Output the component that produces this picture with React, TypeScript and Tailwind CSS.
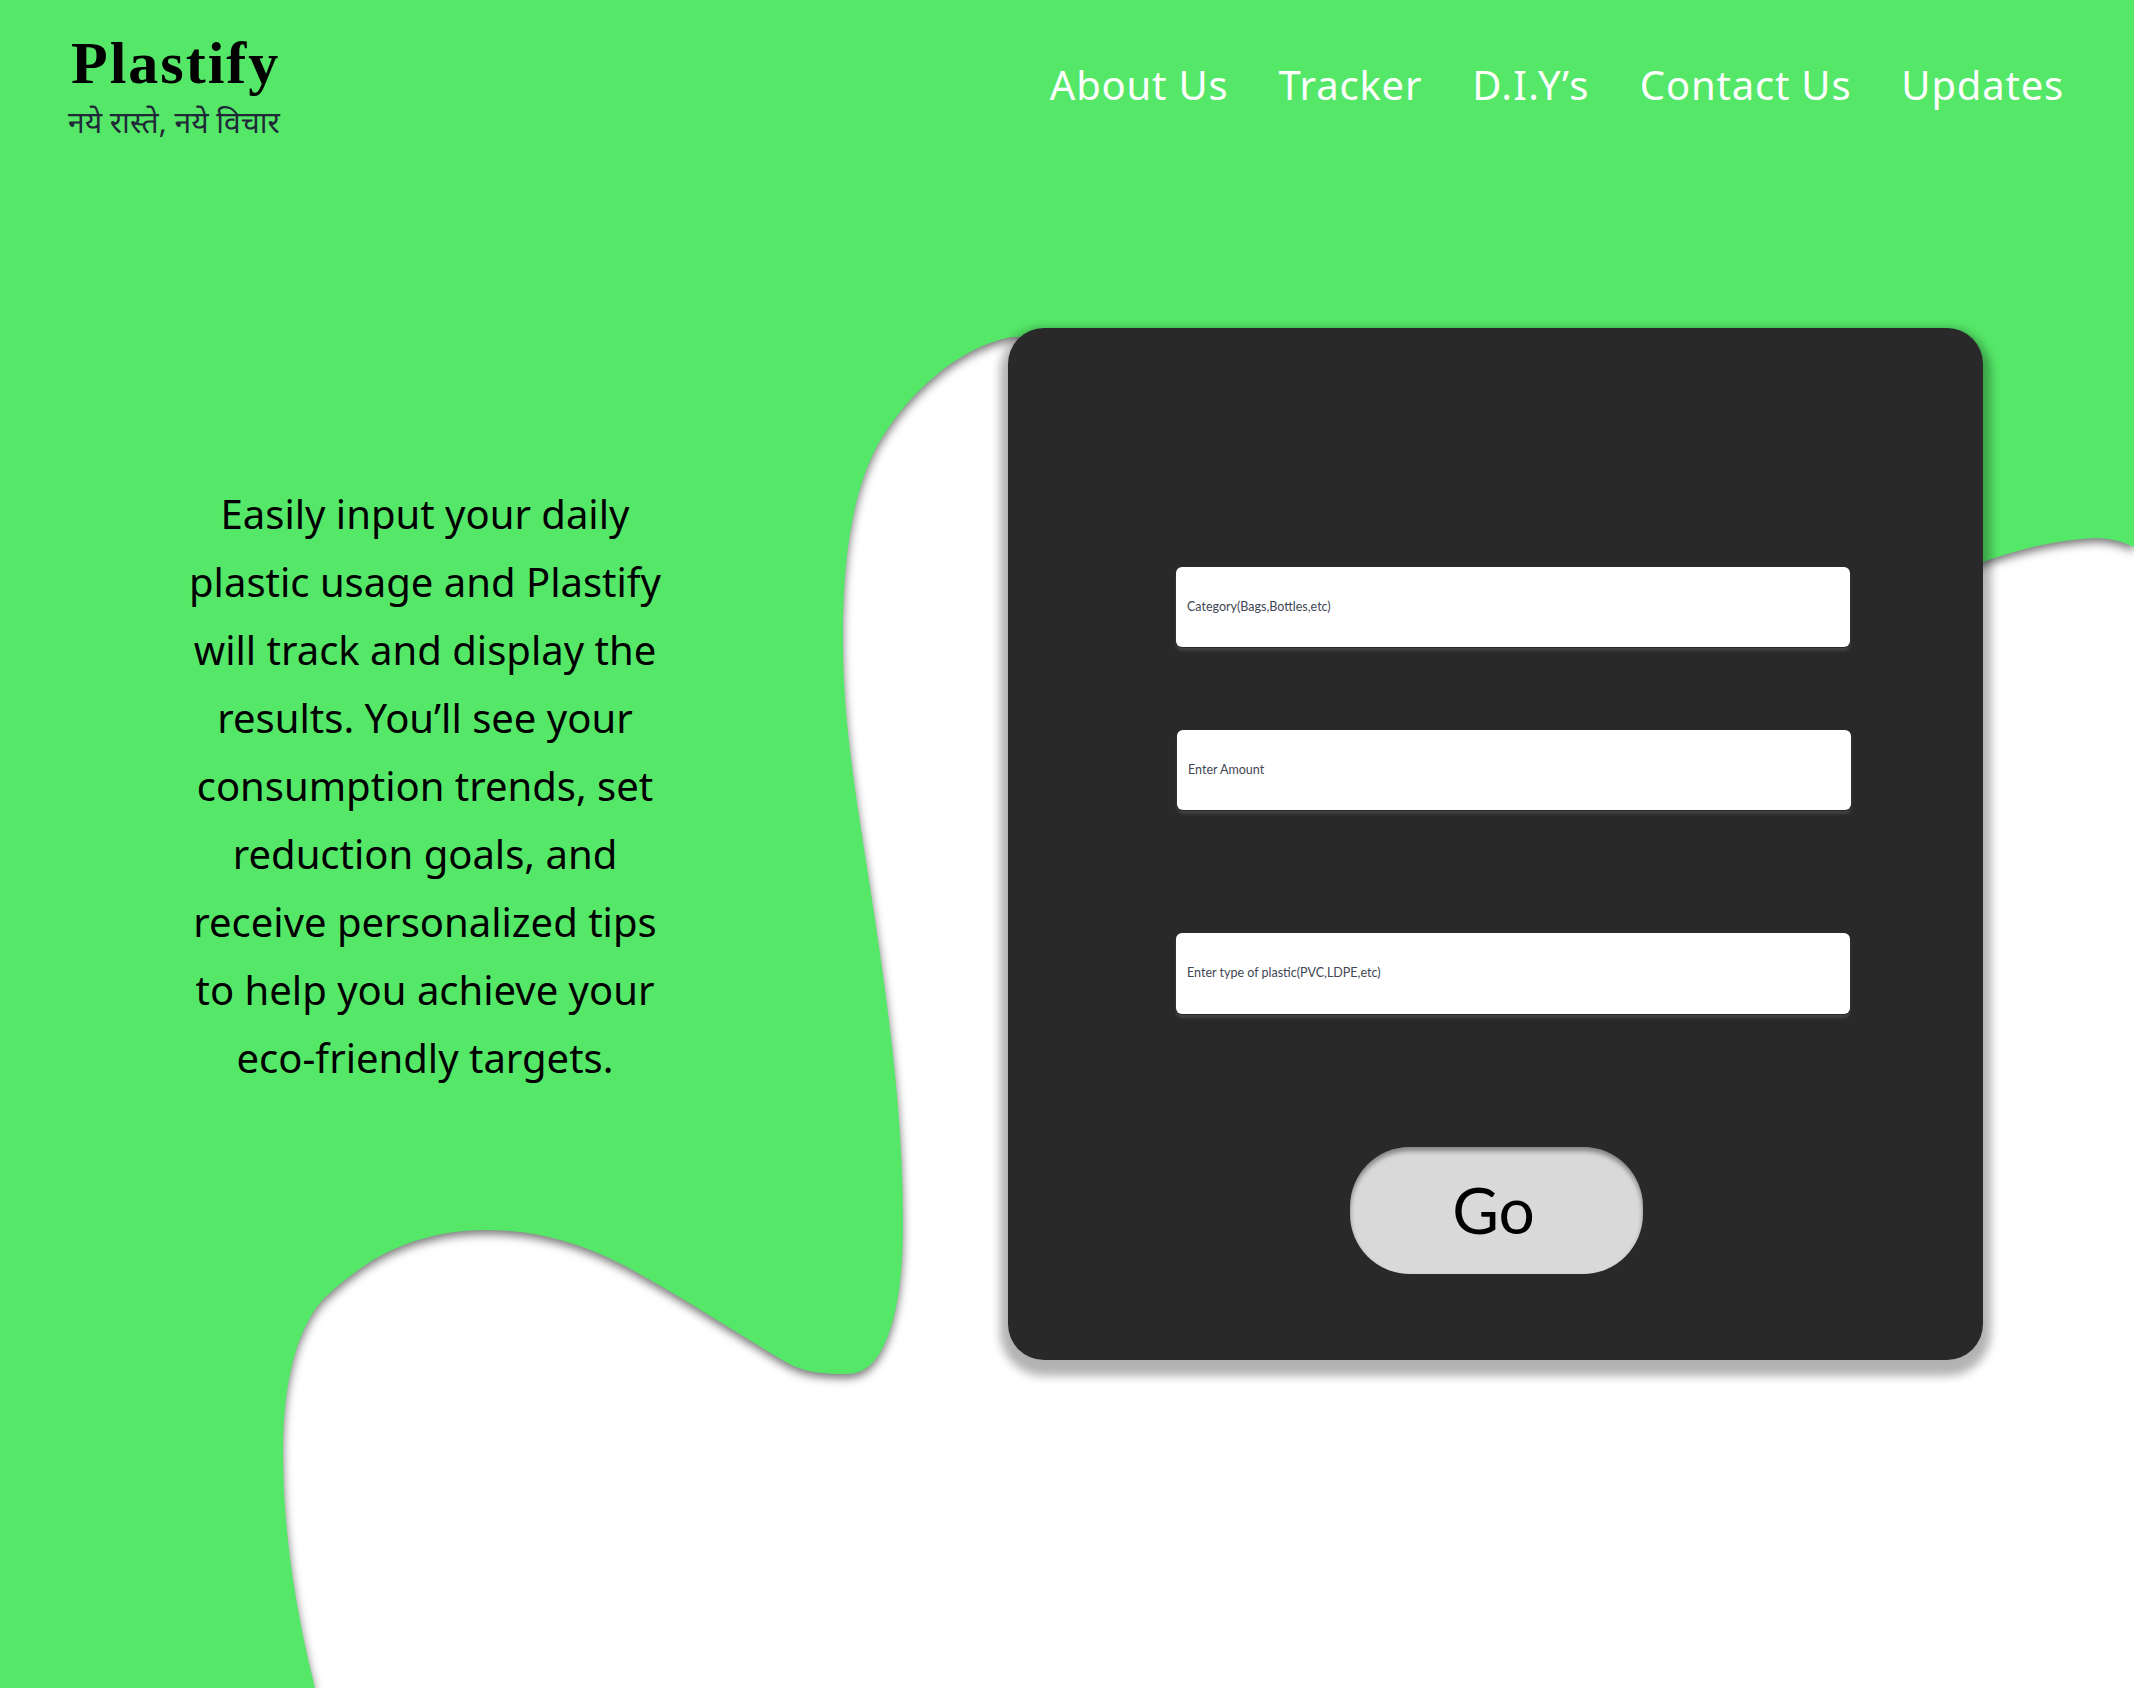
const links = ['About Us', 'Tracker', 'D.I.Y’s', 'Contact Us', 'Updates']

const lines = [
  'Easily input your daily',
  'plastic usage and Plastify',
  'will track and display the',
  'results. You’ll see your',
  'consumption trends, set',
  'reduction goals, and',
  'receive personalized tips',
  'to help you achieve your',
  'eco-friendly targets.',
]

function Backdrop() {
  return (
    <svg
      className="absolute inset-0 drop-shadow-[0_4px_5px_rgba(0,0,0,0.55)]"
      width="2134"
      height="1688"
      viewBox="0 0 2134 1688"
    >
      <path
        fill="#55e868"
        d="M0 0H2134V547C2122 541 2108 538 2095 538C2055 540 2015 550 1983 562C1700 660 1300 330 1013 337C960 345 905 395 875 450C850 500 842 570 843 650C844 740 862 830 875 920C890 1020 903 1120 903 1223C903 1285 895 1330 878 1356C868 1370 858 1374 846 1374C826 1374 804 1373 786 1362C767 1351 725 1325 696 1307C660 1285 630 1268 607 1257C570 1240 530 1230 487 1230C440 1230 400 1243 370 1262C352 1274 342 1282 330 1293C315 1305 305 1325 297 1347C288 1375 283 1410 283 1450C283 1540 298 1620 315 1688L0 1688Z"
      />
    </svg>
  )
}

function Field({ placeholder, className }: { placeholder: string; className: string }) {
  return (
    <input
      placeholder={placeholder}
      className={`w-[674px] rounded-md bg-white pb-[2px] pl-[11px] font-['Lato',sans-serif] text-[12.5px] text-[#3f4654] placeholder:text-[#3f4654] shadow-[0_1px_0_#26262b,0_4px_3px_rgba(255,255,255,0.12)] outline-none ${className}`}
    />
  )
}

export default function App() {
  return (
    <div className="relative h-[1688px] w-full overflow-hidden bg-white font-['Noto_Sans',sans-serif]">
      <Backdrop />

      <div className="relative">
        <header className="flex h-[170px] items-start justify-between pl-[68px] pr-[70px]">
          <div className="pt-[30px]">
            <div className="pl-[3px] font-['Liberation_Serif',serif] text-[60px] font-bold leading-[66px] tracking-[2px] text-black">Plastify</div>
            <div className="mt-[8px] text-[30px] leading-[36px] text-[#1f2937]">नये रास्ते, नये विचार</div>
          </div>
          <nav className="flex gap-[50px] pt-[57px]">
            {links.map(l => (
              <a key={l} className={`text-[40px] leading-[56px] text-white ${l === 'D.I.Y’s' ? 'tracking-[1.4px]' : 'tracking-[0.8px]'}`}>{l}</a>
            ))}
          </nav>
        </header>

        <main className="flex items-start pt-[158px]">
          <p className="ml-[175px] mt-[152px] w-[500px] text-center text-[40px] leading-[68px] text-black">
            {lines.map(l => (
              <span key={l} className="block">{l}</span>
            ))}
          </p>

          <section className="ml-[333px] flex h-[1032px] w-[975px] flex-col rounded-[36px] bg-[#292929] pl-[168px] pt-[239px] shadow-[0_8px_10px_8px_rgba(0,0,0,0.3)]">
            <Field placeholder="Category(Bags,Bottles,etc)" className="h-[80px]" />
            <Field placeholder="Enter Amount" className="ml-[1px] mt-[83px] h-[80px]" />
            <Field placeholder="Enter type of plastic(PVC,LDPE,etc)" className="mt-[123px] h-[81px]" />
            <button className="ml-[174px] mt-[133px] h-[127px] w-[293px] rounded-[60px] bg-[#d9d9d9] pb-[2px] pr-[6px] font-['Lato',sans-serif] text-[64px] text-black shadow-[inset_0_4px_5px_rgba(0,0,0,0.4)]">
              Go
            </button>
          </section>
        </main>
      </div>
    </div>
  )
}
